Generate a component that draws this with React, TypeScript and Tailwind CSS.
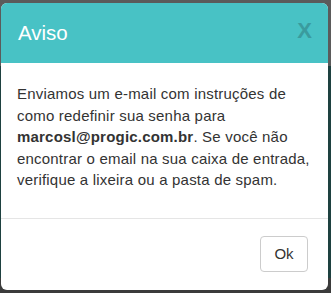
export default function App() {
  return (
    <div
      className="w-[331px] h-[293px] overflow-hidden bg-[linear-gradient(to_bottom,#5b5b5b_0px,#5b5b5b_66px,#1e4140_66px,#1e4140_278px,#3b3b3b_278px)] pt-[3px] pl-[1px]"
      style={{ fontFamily: '"Liberation Sans", Arial, sans-serif' }}
    >
      <div className="w-[327px] h-[287px] rounded-[6px] overflow-hidden bg-white flex flex-col">
        <div className="h-[60px] shrink-0 bg-[#48c2c5] flex items-start justify-between pl-[17px] pr-[16px]">
          <div className="text-white text-[20.5px] leading-none mt-[20px]">Aviso</div>
          <div className="text-[#3a9b9e] text-[22px] font-bold leading-none mt-[17px]">X</div>
        </div>
        <div className="h-[156px] shrink-0 px-[16px] pt-[20px] text-[15px] tracking-[0.2px] leading-[21.6px] text-[#333333] border-b border-[#e5e5e5]">
          Enviamos um e-mail com instruções de como redefinir sua senha para{" "}
          <b>marcosl@progic.com.br</b>. Se você não encontrar o email na sua caixa de entrada, verifique a lixeira ou a pasta de spam.
        </div>
        <div className="flex justify-end pr-[20px] pt-[17px]">
          <button className="w-[48px] h-[36px] border border-[#cccccc] rounded-[4px] bg-white text-[15px] text-[#333333]">
            Ok
          </button>
        </div>
      </div>
    </div>
  );
}
